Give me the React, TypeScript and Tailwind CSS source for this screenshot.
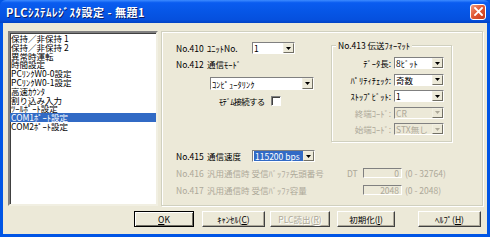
import React from "react";

const listItems = [
  "保持／非保持 1",
  "保持／非保持 2",
  "異常時運転",
  "時間設定",
  "PCﾘﾝｸW0-0設定",
  "PCﾘﾝｸW0-1設定",
  "高速ｶｳﾝﾀ",
  "割り込み入力",
  "ﾂｰﾙﾎﾟｰﾄ設定",
  "COM1ﾎﾟｰﾄ設定",
  "COM2ﾎﾟｰﾄ設定",
];

const ArrowButton = ({ disabled }: { disabled?: boolean }) => (
  <div className="w-[11px] h-full flex items-center justify-center bg-[#ECE9D8] border border-t-[#F1EFE2] border-l-[#F1EFE2] border-b-[#716F64] border-r-[#716F64]">
    <svg width="5" height="3" viewBox="0 0 5 3">
      <path d="M0 0H5L2.5 3Z" fill={disabled ? "#ACA899" : "#000"} />
    </svg>
  </div>
);

const Combo = ({
  value,
  className,
  disabled,
  selected,
}: {
  value: string;
  className: string;
  disabled?: boolean;
  selected?: boolean;
}) => (
  <div
    className={`flex items-stretch border border-t-[#808080] border-l-[#808080] border-b-white border-r-white ${
      disabled ? "bg-[#ECE9D8]" : "bg-white"
    } ${className}`}
  >
    <div className="flex-1 flex items-center pl-[1px] overflow-hidden">
      <span
        className={`leading-[10px] whitespace-nowrap ${
          selected ? "bg-[#316AC5] text-white pl-[1px] pr-[6px]" : ""
        } ${disabled ? "text-[#ACA899]" : ""}`}
      >
        {value}
      </span>
    </div>
    <ArrowButton disabled={disabled} />
  </div>
);

const Button = ({
  label,
  hot,
  rest,
  className,
  isDefault,
  disabled,
}: {
  label: string;
  hot: string;
  rest: string;
  className: string;
  isDefault?: boolean;
  disabled?: boolean;
}) => (
  <div
    className={`h-[16px] flex items-center justify-center bg-[#ECE9D8] border ${
      isDefault
        ? "border-black shadow-[inset_1px_1px_0_#fff,inset_-1px_-1px_0_#716F64]"
        : "border-t-white border-l-white border-b-[#404040] border-r-[#404040] shadow-[inset_-1px_-1px_0_#ACA899]"
    } ${disabled ? "text-[#ACA899] [text-shadow:1px_1px_0_#fff]" : ""} ${className}`}
  >
    <span className="leading-[10px] whitespace-nowrap">
      {label}
      <span className="underline">{hot}</span>
      {rest}
    </span>
  </div>
);

const TitleBar = () => (
  <div className="h-[23px] flex items-center justify-between pl-[6px] pr-[4px] rounded-t-[6px] bg-[linear-gradient(to_bottom,#3D8BFF_0%,#0A5CF0_12%,#0656E6_50%,#0550DE_85%,#0142C4_100%)]">
    <span className="text-white font-bold text-[11px] leading-[12px] tracking-[0.5px] [text-shadow:1px_1px_0_#0A1F6A]">
      PLCｼｽﾃﾑﾚｼﾞｽﾀ設定 - 無題1
    </span>
    <div className="w-[16px] h-[16px] rounded-[3px] border border-white flex items-center justify-center bg-[linear-gradient(135deg,#F29B80,#E25A35_45%,#C6391A)]">
      <svg width="9" height="9" viewBox="0 0 9 9">
        <path d="M1 1L8 8M8 1L1 8" stroke="#fff" strokeWidth="1.8" strokeLinecap="square" />
      </svg>
    </div>
  </div>
);

const ListBox = () => (
  <div className="w-[150px] h-full bg-white border-2 border-t-[#808080] border-l-[#808080] border-b-[#F1EFE2] border-r-[#F1EFE2] shadow-[inset_1px_1px_0_#404040] pt-[1px] text-[8.5px]">
    {listItems.map((item, i) => (
      <div
        key={i}
        className={`h-[8.8px] leading-[8.8px] pl-[1px] whitespace-nowrap ${
          i === 9 ? "bg-[#316AC5] text-white" : ""
        }`}
      >
        {item}
      </div>
    ))}
  </div>
);

const FormatGroup = () => (
  <div className="relative w-[121px] h-[97px] mt-[13px] border border-[#D0D0BF] shadow-[inset_1px_1px_0_#fff,1px_1px_0_#fff]">
    <span className="absolute left-[4px] top-[-6px] px-[2px] bg-[#ECE9D8] leading-[10px] whitespace-nowrap">
      No.413 伝送ﾌｫｰﾏｯﾄ
    </span>
    <div className="flex flex-col pt-[11px] gap-[4.5px]">
      {[
        { label: "ﾃﾞｰﾀ長:", value: "8ﾋﾞｯﾄ" },
        { label: "ﾊﾟﾘﾃｨﾁｪｯｸ:", value: "奇数" },
        { label: "ｽﾄｯﾌﾟﾋﾞｯﾄ:", value: "1" },
        { label: "終端ｺｰﾄﾞ:", value: "CR", disabled: true },
        { label: "始端ｺｰﾄﾞ:", value: "STX無し", disabled: true },
      ].map((r) => (
        <div key={r.label} className="flex items-center h-[12px]">
          <span
            className={`w-[59px] text-right whitespace-nowrap leading-[10px] ${
              r.disabled ? "text-[#ACA899]" : ""
            }`}
          >
            {r.label}
          </span>
          <Combo value={r.value} disabled={r.disabled} className="ml-[3px] w-[50px] h-[12px]" />
        </div>
      ))}
    </div>
  </div>
);

const Panel = () => (
  <div className="w-[322px] h-full border border-[#D0D0BF] shadow-[inset_1px_1px_0_#fff,1px_1px_0_#fff] flex flex-col text-[8.5px]">
    <div className="flex h-[110px]">
      <div className="w-[169px] flex flex-col pl-[14px] pt-[10px]">
        <div className="flex items-center h-[12px]">
          <span className="w-[31px] leading-[10px]">No.410</span>
          <span className="w-[45px] leading-[10px] whitespace-nowrap">ﾕﾆｯﾄNo.</span>
          <Combo value="1" className="w-[43px] h-[12px]" />
        </div>
        <div className="flex items-center h-[12px] mt-[4px]">
          <span className="w-[31px] leading-[10px]">No.412</span>
          <span className="leading-[10px] whitespace-nowrap">通信ﾓｰﾄﾞ</span>
        </div>
        <Combo value="ｺﾝﾋﾟｭｰﾀﾘﾝｸ" className="ml-[34px] mt-[7px] w-[104px] h-[13px]" />
        <div className="flex items-center h-[10px] mt-[6px] ml-[43px]">
          <span className="w-[52px] leading-[10px] whitespace-nowrap tracking-[-0.8px]">ﾓﾃﾞﾑ接続する</span>
          <div className="w-[10px] h-[10px] bg-white border border-t-[#808080] border-l-[#808080] border-b-white border-r-white shadow-[inset_1px_1px_0_#404040]" />
        </div>
      </div>
      <FormatGroup />
    </div>
    <div className="flex flex-col pl-[14px]">
      <div className="flex items-center h-[12px] mt-[8px]">
        <span className="w-[31px] leading-[10px]">No.415</span>
        <span className="w-[45px] leading-[10px] whitespace-nowrap">通信速度</span>
        <Combo value="115200 bps" selected className="w-[63px] h-[12px]" />
      </div>
      <div className="flex items-center h-[10px] mt-[6px] text-[#ACA899]">
        <span className="w-[31px] leading-[10px]">No.416</span>
        <span className="w-[140px] leading-[10px] whitespace-nowrap">汎用通信時 受信ﾊﾞｯﾌｧ先頭番号</span>
        <span className="w-[16px] leading-[10px]">DT</span>
        <div className="w-[39px] h-[10px] flex items-center justify-end pr-[2px] border border-t-[#808080] border-l-[#808080] border-b-white border-r-white leading-[9px]">
          0
        </div>
        <span className="ml-[3px] leading-[10px] whitespace-nowrap">(0 - 32764)</span>
      </div>
      <div className="flex items-center h-[10px] mt-[7px] text-[#ACA899]">
        <span className="w-[31px] leading-[10px]">No.417</span>
        <span className="w-[156px] leading-[10px] whitespace-nowrap">汎用通信時 受信ﾊﾞｯﾌｧ容量</span>
        <div className="w-[39px] h-[10px] flex items-center justify-end pr-[2px] border border-t-[#808080] border-l-[#808080] border-b-white border-r-white leading-[9px]">
          2048
        </div>
        <span className="ml-[3px] leading-[10px] whitespace-nowrap">(0 - 2048)</span>
      </div>
    </div>
  </div>
);

export default function App() {
  return (
    <div className="w-[490px] h-[237px] flex flex-col bg-[#0055E5] font-['Noto_Sans_CJK_JP',sans-serif] text-black overflow-hidden">
      <TitleBar />
      <div className="flex-1 mx-[3px] mb-[3px] bg-[#ECE9D8] flex flex-col pt-[8px] pl-[5px] pr-[4px]">
        <div className="flex gap-[3px] h-[175px]">
          <ListBox />
          <Panel />
        </div>
        <div className="flex mt-[5px] text-[8.5px]">
          <Button label="" hot="O" rest="K" isDefault className="ml-[126px] w-[60px]" />
          <Button label="ｷｬﾝｾﾙ(" hot="C" rest=")" className="ml-[8px] w-[63px]" />
          <Button label="PLC読出(" hot="R" rest=")" disabled className="ml-[5px] w-[60px]" />
          <Button label="初期化(" hot="I" rest=")" className="ml-[7px] w-[58px]" />
          <Button label="ﾍﾙﾌﾟ(" hot="H" rest=")" className="ml-[23px] w-[63px]" />
        </div>
      </div>
    </div>
  );
}
